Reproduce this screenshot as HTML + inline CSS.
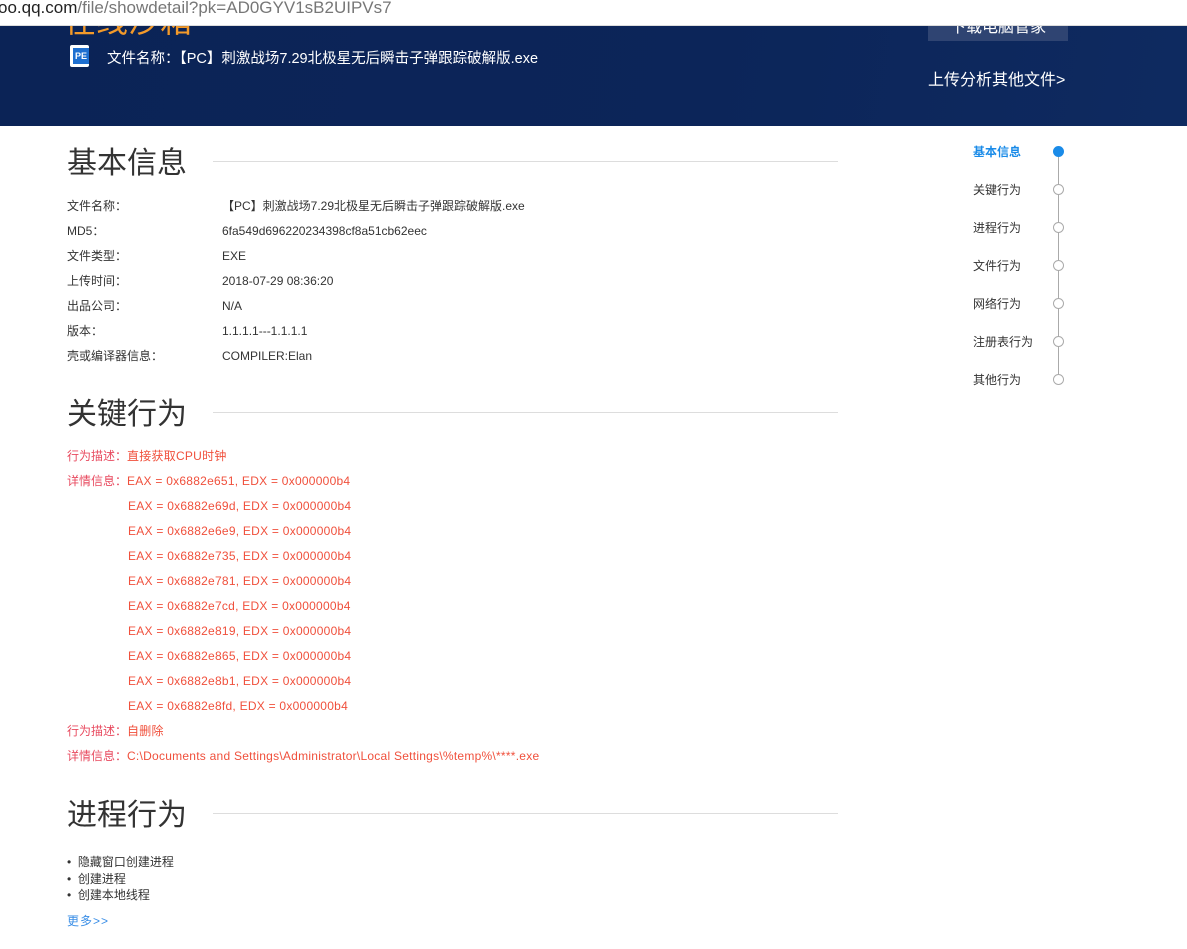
<!DOCTYPE html>
<html><head><meta charset="utf-8"><style>
*{margin:0;padding:0;box-sizing:border-box}
body{width:1187px;height:949px;overflow:hidden;background:#fff;font-family:"Liberation Sans","Noto Sans CJK SC",sans-serif;color:#333;position:relative}
.url{position:absolute;left:0;top:0;width:1187px;height:26px;background:#fff;border-bottom:1px solid #ddd;font-size:17px;line-height:18px;color:#222;white-space:nowrap;z-index:5}
.url span{color:#777}
.hdr{position:absolute;left:0;top:26px;width:1187px;height:100px;background:linear-gradient(100deg,#0b2356,#0c2559 60%,#0e2a60);overflow:hidden}
.abs{position:absolute;white-space:nowrap}
.h{font-size:30px;color:#333;font-weight:normal;line-height:36px}
.line{position:absolute;height:1px;background:#ddd;left:213px;width:625px}
.r{font-size:12px;color:#333;line-height:16px}
.red{font-size:12px;color:#f0503c;line-height:16px;letter-spacing:0.25px}
.pk{color:#e84a5f;letter-spacing:0}
.nav{font-size:12px;color:#333}
.dot{position:absolute;left:1053px;width:11px;height:11px;border-radius:50%;border:1px solid #aaa;background:#fff}
</style></head><body>
<div class="url"><div class="abs" style="left:-2px;top:-1px">oo.qq.com<span>/file/showdetail?pk=AD0GYV1sB2UIPVs7</span></div></div>
<div class="hdr">
  <div class="abs" style="left:64px;top:-25px;font-size:32px;color:#f39a2a;line-height:40px">在线沙箱</div>
  <div class="abs" style="left:928px;top:0;width:140px;height:15px;background:#2f4472;color:#fff;font-size:16px;text-align:center;overflow:hidden;line-height:4px">下载电脑管家</div>
  <div class="abs" style="left:70px;top:19px;width:19px;height:22px;background:#fff;border-radius:2px"></div>
  <div class="abs" style="left:73px;top:22px;width:16px;height:16px;background:#1e6fd0;color:#fff;font-size:9px;font-weight:bold;line-height:16px;text-align:center">PE</div>
  <div class="abs" style="left:107px;top:21px;font-size:14.5px;color:#fff">文件名称：【PC】刺激战场7.29北极星无后瞬击子弹跟踪破解版.exe</div>
  <div class="abs" style="left:928px;top:40px;font-size:16px;color:#fff">上传分析其他文件&gt;</div>
</div>

<div class="abs h" style="left:67px;top:146px">基本信息</div><div class="line" style="top:161px"></div>
<div class="abs r" style="left:67px;top:198px">文件名称：</div><div class="abs r" style="left:222px;top:198px">【PC】刺激战场7.29北极星无后瞬击子弹跟踪破解版.exe</div>
<div class="abs r" style="left:67px;top:223px">MD5：</div><div class="abs r" style="left:222px;top:223px">6fa549d696220234398cf8a51cb62eec</div>
<div class="abs r" style="left:67px;top:248px">文件类型：</div><div class="abs r" style="left:222px;top:248px">EXE</div>
<div class="abs r" style="left:67px;top:273px">上传时间：</div><div class="abs r" style="left:222px;top:273px">2018-07-29 08:36:20</div>
<div class="abs r" style="left:67px;top:298px">出品公司：</div><div class="abs r" style="left:222px;top:298px">N/A</div>
<div class="abs r" style="left:67px;top:323px">版本：</div><div class="abs r" style="left:222px;top:323px">1.1.1.1---1.1.1.1</div>
<div class="abs r" style="left:67px;top:348px">壳或编译器信息：</div><div class="abs r" style="left:222px;top:348px">COMPILER:Elan</div>

<div class="abs h" style="left:67px;top:397px">关键行为</div><div class="line" style="top:412px"></div>
<div class="abs red" style="left:67px;top:448px"><span class="pk">行为描述：</span>直接获取CPU时钟</div>
<div class="abs red" style="left:67px;top:473px"><span class="pk">详情信息：</span>EAX = 0x6882e651, EDX = 0x000000b4</div>
<div class="abs red" style="left:128px;top:498px">EAX = 0x6882e69d, EDX = 0x000000b4</div>
<div class="abs red" style="left:128px;top:523px">EAX = 0x6882e6e9, EDX = 0x000000b4</div>
<div class="abs red" style="left:128px;top:548px">EAX = 0x6882e735, EDX = 0x000000b4</div>
<div class="abs red" style="left:128px;top:573px">EAX = 0x6882e781, EDX = 0x000000b4</div>
<div class="abs red" style="left:128px;top:598px">EAX = 0x6882e7cd, EDX = 0x000000b4</div>
<div class="abs red" style="left:128px;top:623px">EAX = 0x6882e819, EDX = 0x000000b4</div>
<div class="abs red" style="left:128px;top:648px">EAX = 0x6882e865, EDX = 0x000000b4</div>
<div class="abs red" style="left:128px;top:673px">EAX = 0x6882e8b1, EDX = 0x000000b4</div>
<div class="abs red" style="left:128px;top:698px">EAX = 0x6882e8fd, EDX = 0x000000b4</div>
<div class="abs red" style="left:67px;top:723px"><span class="pk">行为描述：</span>自删除</div>
<div class="abs red" style="left:67px;top:748px"><span class="pk">详情信息：</span>C:\Documents and Settings\Administrator\Local Settings\%temp%\****.exe</div>

<div class="abs h" style="left:67px;top:798px">进程行为</div><div class="line" style="top:813px"></div>
<div class="abs r" style="left:67px;top:854px;line-height:16.5px">• &nbsp;隐藏窗口创建进程<br>• &nbsp;创建进程<br>• &nbsp;创建本地线程</div>
<div class="abs" style="left:67px;top:912px;font-size:12px;color:#3a8ee6;letter-spacing:1px">更多&gt;&gt;</div>

<div class="abs" style="left:1058px;top:152px;width:1px;height:228px;background:#aaa"></div>
<div class="abs nav" style="left:973px;top:143px;color:#1a8be8;font-weight:bold">基本信息</div>
<div class="dot" style="top:146px;background:#1a8be8;border-color:#1a8be8"></div>
<div class="abs nav" style="left:973px;top:181px">关键行为</div><div class="dot" style="top:184px"></div>
<div class="abs nav" style="left:973px;top:219px">进程行为</div><div class="dot" style="top:222px"></div>
<div class="abs nav" style="left:973px;top:257px">文件行为</div><div class="dot" style="top:260px"></div>
<div class="abs nav" style="left:973px;top:295px">网络行为</div><div class="dot" style="top:298px"></div>
<div class="abs nav" style="left:973px;top:333px">注册表行为</div><div class="dot" style="top:336px"></div>
<div class="abs nav" style="left:973px;top:371px">其他行为</div><div class="dot" style="top:374px"></div>
</body></html>
